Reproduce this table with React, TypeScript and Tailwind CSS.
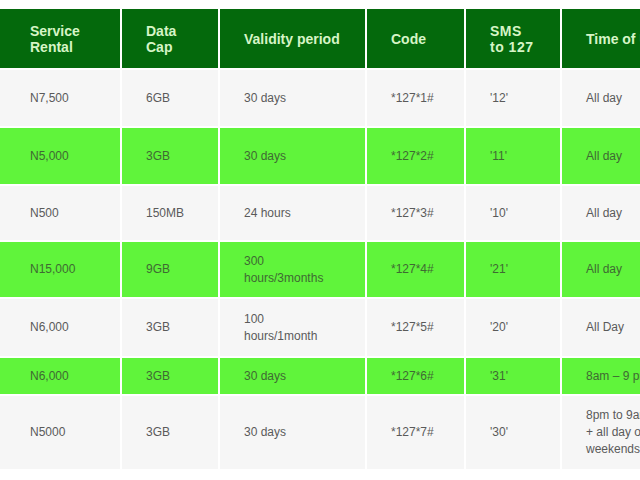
import React from 'react';

type Row = {
  green: boolean;
  h: string;
  cells: React.ReactNode[];
};

const headers: React.ReactNode[] = [
  '',
  <>Service<br />Rental</>,
  <>Data<br />Cap</>,
  'Validity period',
  'Code',
  <span className="tracking-[0.5px]">SMS<br />to 127</span>,
  'Time of Use',
];

const rows: Row[] = [
  { green: false, h: 'h-[56px]', cells: ['', 'N7,500', '6GB', '30 days', '*127*1#', "'12'", 'All day'] },
  { green: true, h: 'h-[56px]', cells: ['', 'N5,000', '3GB', '30 days', '*127*2#', "'11'", 'All day'] },
  { green: false, h: 'h-[54px]', cells: ['', 'N500', '150MB', '24 hours', '*127*3#', "'10'", 'All day'] },
  {
    green: true,
    h: 'h-[55px]',
    cells: ['', 'N15,000', '9GB', <>300<br />hours/3months</>, '*127*4#', "'21'", 'All day'],
  },
  {
    green: false,
    h: 'h-[57px]',
    cells: ['', 'N6,000', '3GB', <>100<br />hours/1month</>, '*127*5#', "'20'", 'All Day'],
  },
  { green: true, h: 'h-[36px]', cells: ['', 'N6,000', '3GB', '30 days', '*127*6#', "'31'", '8am – 9 pm'] },
  {
    green: false,
    h: 'h-[73px]',
    cells: [
      '',
      'N5000',
      '3GB',
      '30 days',
      '*127*7#',
      "'30'",
      <>8pm to 9am<br />+ all day on<br />weekends</>,
    ],
  },
];

export default function App() {
  return (
    <div
      className="w-[640px] h-[480px] overflow-hidden bg-white pt-[9px]"
      style={{ fontFamily: '"Liberation Sans", Arial, sans-serif' }}
    >
      <div className="grid grid-cols-[4px_114px_96px_145px_97px_94px_160px] gap-[2px] w-max">
        {/* Header */}
        {headers.map((h, i) => (
          <div
            key={`h${i}`}
            className="h-[59px] bg-[#04690c] text-[#d6f5c6] text-[14px] font-bold leading-4 pl-6 flex items-center whitespace-nowrap"
          >
            <div>{h}</div>
          </div>
        ))}

        {/* Body rows */}
        {rows.map((r, ri) =>
          r.cells.map((c, ci) => (
            <div
              key={`r${ri}c${ci}`}
              className={`${r.h} pl-6 flex items-center text-[12px] leading-[17px] whitespace-nowrap ${
                r.green ? 'bg-[#60f43b] text-[#3f6a33]' : 'bg-[#f6f6f6] text-[#5a5a5a]'
              }`}
            >
              <div>{c}</div>
            </div>
          ))
        )}
      </div>
    </div>
  );
}
